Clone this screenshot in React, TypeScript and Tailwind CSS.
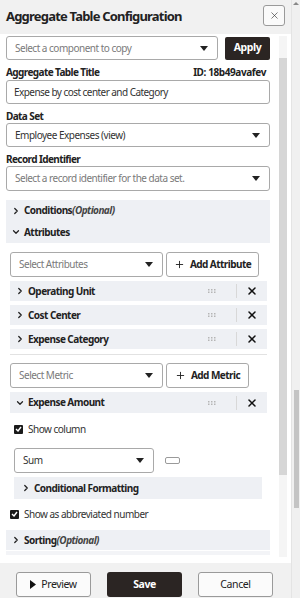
import { ChevronRight, ChevronDown, X, Plus } from "lucide-react";

const font = { fontFamily: '"Noto Sans", "Open Sans", sans-serif' };

const Caret = () => (
  <svg width="8" height="5" viewBox="0 0 8 5" className="shrink-0">
    <path d="M0 0 L8 0 L4 5 Z" fill="#222" />
  </svg>
);

const SelectBox = ({ text, placeholder, className }: { text: string; placeholder?: boolean; className: string }) => (
  <div
    className={`flex items-center justify-between border border-[#a9a9a9] rounded-[3px] bg-white pl-[8px] pr-[9px] ${className}`}
  >
    <span className={`text-[10px] tracking-[-0.5px] ${placeholder ? "text-[#7a7a7a]" : "text-[#333]"}`}>{text}</span>
    <Caret />
  </div>
);

const Label = ({ children }: { children: React.ReactNode }) => (
  <div className="text-[10px] font-bold text-[#222] tracking-[-0.6px] leading-[13px]">{children}</div>
);

const Section = ({ title, open, optional, className }: { title: string; open?: boolean; optional?: boolean; className: string }) => (
  <div className={`flex items-center bg-[#eef0f4] pl-[5px] ${className}`}>
    {open ? (
      <ChevronDown size={10} strokeWidth={3} className="text-[#222]" />
    ) : (
      <ChevronRight size={10} strokeWidth={3} className="text-[#222]" />
    )}
    <span className="ml-[3px] text-[10px] font-bold text-[#222] tracking-[-0.55px]">
      {title}
      {optional && <span className="italic font-bold text-[#444]">(Optional)</span>}
    </span>
  </div>
);

const Dots = () => (
  <svg width="9" height="4" viewBox="0 0 9 4" className="shrink-0">
    {[0, 3, 6].map((x) => (
      <g key={x}>
        <rect x={x} y="0" width="1.5" height="1.5" fill="#b5b5b5" />
        <rect x={x} y="2.5" width="1.5" height="1.5" fill="#b5b5b5" />
      </g>
    ))}
  </svg>
);

const ItemRow = ({ title, open, className }: { title: string; open?: boolean; className: string }) => (
  <div className={`flex items-center bg-[#eef0f4] pl-[5px] w-[257px] ml-[4px] ${className}`}>
    {open ? (
      <ChevronDown size={10} strokeWidth={3} className="text-[#222]" />
    ) : (
      <ChevronRight size={10} strokeWidth={3} className="text-[#222]" />
    )}
    <span className="ml-[3px] flex-1 text-[10px] font-bold text-[#222] tracking-[-0.55px]">{title}</span>
    <Dots />
    <div className="w-px h-[14px] bg-[#d8d8d8] ml-[19px]" />
    <X size={12} strokeWidth={3} className="text-[#111] ml-[9px] mr-[9px]" />
  </div>
);

const Check = ({ label, className }: { label: string; className: string }) => (
  <div className={`flex items-center ${className}`}>
    <div className="w-[9px] h-[9px] bg-[#1a1a1a] rounded-[1px] flex items-center justify-center">
      <svg width="7" height="6" viewBox="0 0 7 6">
        <path d="M1 3 L3 5 L6 1" stroke="#fff" strokeWidth="1.4" fill="none" />
      </svg>
    </div>
    <span className="ml-[5px] text-[10px] text-[#333] tracking-[-0.5px]">{label}</span>
  </div>
);

const AddButton = ({ label, className }: { label: string; className: string }) => (
  <div
    className={`flex items-center justify-center border border-[#a9a9a9] rounded-[3px] bg-white h-[25px] ${className}`}
  >
    <Plus size={11} strokeWidth={2} className="text-[#222]" />
    <span className="ml-[5px] text-[10px] font-bold text-[#222] tracking-[-0.55px]">{label}</span>
  </div>
);

export default function App() {
  return (
    <div className="w-[300px] h-[598px] flex bg-white overflow-hidden" style={font}>
      <div className="w-[291px] flex flex-col">
        {/* header */}
        <div className="h-[34px] shrink-0 bg-[#f1f1f1] flex items-center justify-between pl-[6px] pr-[6px]">
          <span className="text-[13px] font-bold text-[#222] tracking-[-0.8px]">Aggregate Table Configuration</span>
          <div className="w-[22px] h-[21px] border border-[#9a9a9a] rounded-[3px] bg-[#fafafa] flex items-center justify-center mt-[-4px]">
            <X size={11} strokeWidth={1.4} className="text-[#333]" />
          </div>
        </div>

        {/* body */}
        <div className="flex flex-1 min-h-0 pt-[2px]">
          <div className="w-[279px] pl-[6px] flex flex-col">
            <div className="flex items-center">
              <SelectBox text="Select a component to copy" placeholder className="w-[212px] h-[24px]" />
              <div className="ml-[7px] w-[45px] h-[23px] bg-[#2b2523] rounded-[2px] flex items-center justify-center">
                <span className="text-[10.5px] font-bold text-white tracking-[-0.4px]">Apply</span>
              </div>
            </div>

            <div className="flex justify-between w-[260px] mt-[6px]">
              <Label>Aggregate Table Title</Label>
              <span className="text-[10px] font-bold text-[#222] tracking-[-0.4px] leading-[13px]">ID: 18b49avafev</span>
            </div>
            <div className="mt-[1px] w-[264px] h-[24px] border border-[#a9a9a9] rounded-[3px] flex items-center pl-[7px]">
              <span className="text-[10px] text-[#333] tracking-[-0.55px]">Expense by cost center and Category</span>
            </div>

            <div className="mt-[6px]">
              <Label>Data Set</Label>
            </div>
            <SelectBox text="Employee Expenses (view)" className="w-[264px] h-[24px]" />

            <div className="mt-[6px]">
              <Label>Record Identifier</Label>
            </div>
            <SelectBox text="Select a record identifier for the data set." placeholder className="w-[264px] h-[25px]" />

            <Section title="Conditions" optional className="w-[264px] h-[21px] mt-[9px]" />
            <Section title="Attributes" open className="w-[264px] h-[22px]" />

            <div className="flex items-center mt-[9px] ml-[4px]">
              <SelectBox text="Select Attributes" placeholder className="w-[153px] h-[25px]" />
              <AddButton label="Add Attribute" className="ml-[3px] w-[93px]" />
            </div>

            <ItemRow title="Operating Unit" className="h-[20px] mt-[4px]" />
            <ItemRow title="Cost Center" className="h-[20px] mt-[4px]" />
            <ItemRow title="Expense Category" className="h-[20px] mt-[4px]" />
            <div className="ml-[4px] w-[257px] h-px bg-[#e2e2e2] mt-[5px]" />

            <div className="flex items-center mt-[8px] ml-[4px]">
              <SelectBox text="Select Metric" placeholder className="w-[153px] h-[25px]" />
              <AddButton label="Add Metric" className="ml-[3px] w-[83px]" />
            </div>

            <ItemRow title="Expense Amount" open className="h-[21px] mt-[4px]" />
            <Check label="Show column" className="ml-[8px] mt-[10px] h-[12px]" />

            <div className="flex items-center ml-[8px] mt-[13px]">
              <SelectBox text="Sum" className="w-[140px] h-[25px]" />
              <div className="ml-[11px] w-[15px] h-[7px] border border-[#9a9a9a] rounded-[2px] bg-white" />
            </div>
            <Section title="Conditional Formatting" className="ml-[8px] w-[248px] h-[22px] mt-[4px] pl-[7px]" />

            <Check label="Show as abbreviated number" className="ml-[4px] mt-[9px] h-[12px]" />
            <Section title="Sorting" optional className="w-[264px] h-[20px] mt-[10px]" />
            <div className="w-[264px] h-[4px] bg-[#f3f4f7] mt-[1px]" />
          </div>

          {/* inner scrollbar */}
          <div className="w-[8px] mb-[6px] flex flex-col bg-[#f5f5f5]">
            <div className="h-[22px]" />
            <div className="h-[417px] bg-[#d6d6d6]" />
          </div>
        </div>

        {/* footer */}
        <div className="h-[35px] shrink-0 bg-[#f1f1f1] flex items-start pt-[9px] pl-[16px] gap-[16px]">
          <div className="w-[75px] h-[25px] border border-[#9a9a9a] rounded-[3px] bg-[#fbfbfb] flex items-center justify-center">
            <svg width="6" height="9" viewBox="0 0 6 9">
              <path d="M0 0 L6 4.5 L0 9 Z" fill="#111" />
            </svg>
            <span className="ml-[5px] text-[10.5px] text-[#222] tracking-[-0.4px]">Preview</span>
          </div>
          <div className="w-[75px] h-[25px] rounded-[3px] bg-[#2b2523] flex items-center justify-center">
            <span className="text-[10.5px] font-bold text-white tracking-[-0.4px]">Save</span>
          </div>
          <div className="w-[75px] h-[25px] border border-[#9a9a9a] rounded-[3px] bg-[#fbfbfb] flex items-center justify-center">
            <span className="text-[10.5px] text-[#222] tracking-[-0.4px]">Cancel</span>
          </div>
        </div>
      </div>

      {/* outer scrollbar */}
      <div className="w-[9px] bg-[#f0f0f0] border-l border-[#e4e4e4] flex flex-col items-center">
        <div className="mt-[2px] w-0 h-0 border-l-[3px] border-r-[3px] border-b-[3px] border-l-transparent border-r-transparent border-b-[#888]" />
        <div className="mt-[385px] w-[5px] h-[118px] bg-[#c4c4c4]" />
      </div>
    </div>
  );
}
